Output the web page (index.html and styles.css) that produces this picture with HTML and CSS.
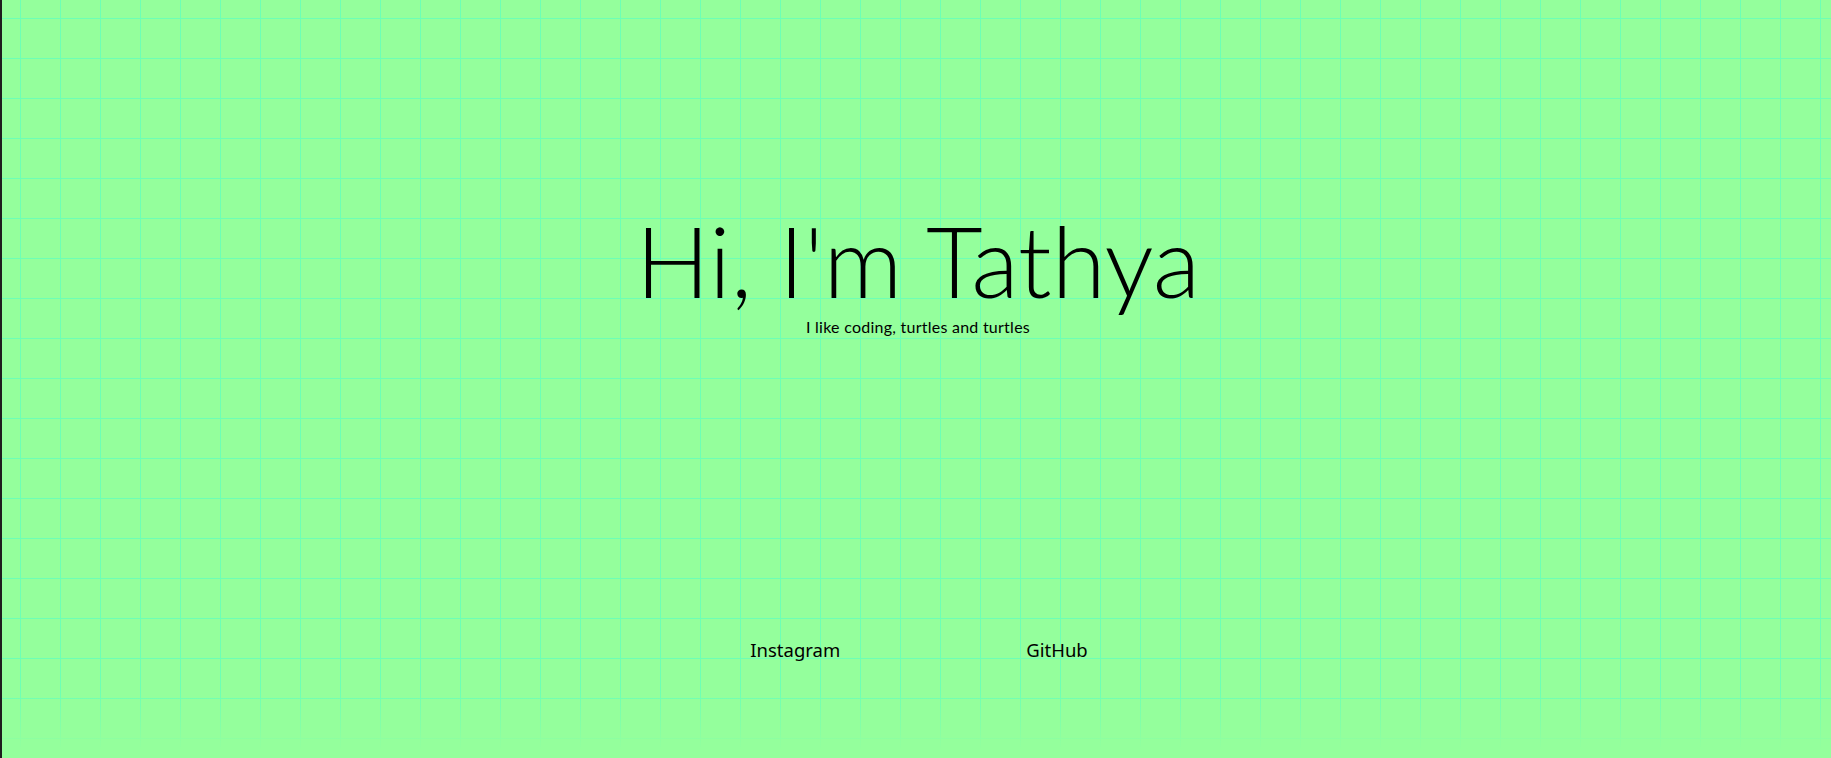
FILE: index.html
```html
<!DOCTYPE html>
<html lang="en">
<head>
<meta charset="utf-8">
<title>Tathya</title>
<link rel="stylesheet" href="styles.css">
</head>
<body>
<div class="page">
  <header class="hero">
    <h1 class="title">Hi, I'm Tathya</h1>
    <p class="tagline">I like coding, turtles and turtles</p>
  </header>
  <nav class="links">
    <a class="link" href="#">Instagram</a>
    <a class="link" href="#">GitHub</a>
  </nav>
</div>
</body>
</html>
```

FILE: styles.css
```css
html, body {
  margin: 0;
  padding: 0;
}

body {
  font-family: "Lato", "Noto Sans", sans-serif;
  color: #000;
  background: #94ff9c;
}

.page {
  box-sizing: border-box;
  height: 100vh;
  border-left: 2px solid #1e1e1e;
  display: flex;
  flex-direction: column;
  align-items: center;
  padding-top: 210px;
  background-color: #94ff9c;
  background-image:
    linear-gradient(to bottom, rgba(148, 255, 156, 0) 690px, #94ff9c 750px),
    linear-gradient(to right, #6dffb6 1px, transparent 1px),
    linear-gradient(to bottom, #6dffb6 1px, transparent 1px);
  background-size: 100% 100%, 40px 40px, 40px 40px;
  background-repeat: no-repeat, repeat, repeat;
  background-position: 0 0, 18px 18px, 18px 18px;
}

.hero {
  display: flex;
  flex-direction: column;
  align-items: center;
  padding-left: 3px;
}

.title {
  margin: 0;
  font-weight: 300;
  font-size: 98px;
  line-height: 100px;
}

.tagline {
  margin: 7px 0 0;
  font-size: 16px;
  line-height: 20px;
  letter-spacing: 0.25px;
}

.links {
  display: flex;
  gap: 186px;
  margin-top: 301px;
  padding-left: 5px;
}

.link {
  color: #000;
  text-decoration: none;
  font-family: "Noto Sans", "Lato", sans-serif;
  font-size: 18.5px;
  line-height: 23px;
}
```
